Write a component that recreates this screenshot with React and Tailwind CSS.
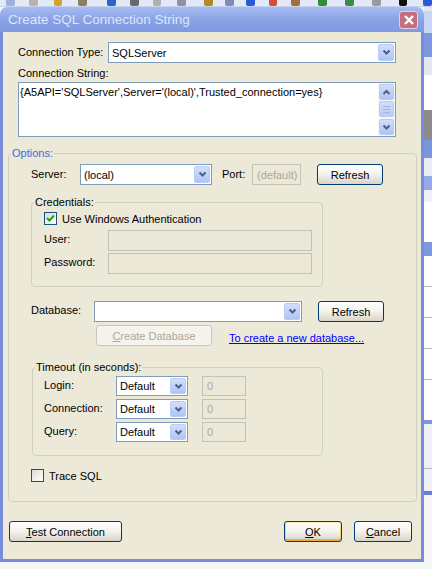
import React from "react";

// Windows XP style "Create SQL Connection String" dialog

const Chevron = () => (
  <svg width="9" height="7" viewBox="0 0 9 7">
    <path d="M1.5 1.5 L4.5 4.5 L7.5 1.5" fill="none" stroke="#4d6185" strokeWidth="2" />
  </svg>
);

const ChevronUp = () => (
  <svg width="9" height="7" viewBox="0 0 9 7">
    <path d="M1.5 5 L4.5 2 L7.5 5" fill="none" stroke="#4d6185" strokeWidth="2" />
  </svg>
);

const DropBtn = ({ className = "" }) => (
  <div
    className={`w-[16px] m-[1px] rounded-[2px] border border-[#b9cbf5] bg-linear-to-b from-[#d2defc] to-[#b0c4f5] flex items-center justify-center ${className}`}
  >
    <Chevron />
  </div>
);

const Combo = ({ className, value }) => (
  <div className={`flex border border-[#7f9db9] bg-white ${className}`}>
    <div className="flex-1 flex items-center pl-[3px] text-black">{value}</div>
    <DropBtn />
  </div>
);

const Field = ({ className, value }) => (
  <div
    className={`flex items-center pl-[4px] border border-[#c4c2b4] bg-[#ebe8d8] text-[#aca899] ${className}`}
  >
    {value}
  </div>
);

const Button = ({ className = "", children, active, disabled }) => (
  <div
    className={`flex items-center justify-center rounded-[3px] border ${
      disabled
        ? "border-[#c9c7ba] bg-[#f4f3ee] text-[#aca899]"
        : "border-[#003c74] bg-linear-to-b from-white via-[#f3f2ec] to-[#d9d4c8] text-black"
    } ${
      active
        ? "shadow-[inset_0_1px_0_#ffeab0,inset_0_-2px_0_#f0ad3c,inset_1px_0_0_#f9d27a,inset_-1px_0_0_#f9d27a]"
        : ""
    } ${className}`}
  >
    {children}
  </div>
);

const Check = ({ checked }) => (
  <div className="w-[13px] h-[13px] border border-[#1c5180] bg-linear-to-br from-[#dcdcd5] to-white flex items-center justify-center">
    {checked && (
      <svg width="9" height="9" viewBox="0 0 9 9">
        <path d="M1 4 L3.5 6.5 L8 1.5" fill="none" stroke="#21a121" strokeWidth="2" />
      </svg>
    )}
  </div>
);

const Group = ({ label, labelClass = "text-black", className, children }) => (
  <div className={`flex flex-col border border-[#d0d0bf] rounded-[4px] ${className}`}>
    <div className={`-mt-[8px] ml-[2px] px-[1px] w-fit h-[14px] leading-[14px] bg-[#ece9d8] ${labelClass}`}>
      {label}
    </div>
    {children}
  </div>
);

const TimeoutRow = ({ label, className }) => (
  <div className={`flex items-center h-[20px] ${className}`}>
    <div className="ml-[11px] w-[72px] -mt-[3px]">{label}</div>
    <Combo className="w-[72px] h-[20px]" value="Default" />
    <Field className="ml-[14px] w-[44px] h-[20px]" value="0" />
  </div>
);

const toolbarIcons = [
  ["ml-[6px]", "bg-[#9fb0d6]"],
  ["ml-[14px]", "bg-[#b9b4a8]"],
  ["ml-[16px]", "bg-[#d2a52a]"],
  ["ml-[16px]", "bg-[#8a7e64]"],
  ["ml-[20px]", "bg-[#3060c8]"],
  ["ml-[14px]", "bg-[#6a6a6a]"],
  ["ml-[14px]", "bg-[#b0b0b0]"],
  ["ml-[16px]", "bg-[#9090a0]"],
  ["ml-[18px]", "bg-[#b08a28]"],
  ["ml-[12px]", "bg-[#7d8db0]"],
  ["ml-[12px]", "bg-[#2a5ad8]"],
  ["ml-[14px]", "bg-[#d05030]"],
  ["ml-[14px]", "bg-[#a07040]"],
  ["ml-[18px]", "bg-[#2f8a3a]"],
  ["ml-[18px]", "bg-[#3a8a50]"],
  ["ml-[18px]", "bg-[#9a9aa0]"],
  ["ml-[18px]", "bg-[#111111]"],
  ["ml-[16px]", "bg-[#2a5ad8]"],
];

const sideBands = [
  ["h-[4px]", "bg-[#dfe5f6]"],
  ["h-[22px]", "bg-[#c9d6f6]"],
  ["h-[24px]", "bg-[#7d98e0]"],
  ["h-[18px]", "bg-[#e5e8f2]"],
  ["h-[35px]", "bg-white"],
  ["h-[30px]", "bg-[#8c8c8c]"],
  ["h-[18px]", "bg-[#7896de]"],
  ["h-[18px]", "bg-[#e8ecf4]"],
  ["h-[14px]", "bg-[#94abea]"],
  ["h-[12px]", "bg-[#eef1f8]"],
  ["h-[40px]", "bg-white"],
  ["h-[14px]", "bg-[#7d98e0]"],
  ["h-[30px]", "bg-white"],
  ["h-[1px]", "bg-[#b8b8b8]"],
  ["h-[30px]", "bg-white"],
  ["h-[1px]", "bg-[#b8b8b8]"],
  ["h-[30px]", "bg-white"],
  ["h-[1px]", "bg-[#b8b8b8]"],
  ["h-[30px]", "bg-white"],
  ["h-[1px]", "bg-[#b8b8b8]"],
  ["h-[40px]", "bg-white"],
  ["h-[4px]", "bg-[#7d98e0]"],
  ["h-[44px]", "bg-[#eef0f6]"],
  ["h-[1px]", "bg-[#b8b8b8]"],
  ["h-[22px]", "bg-[#eef0f6]"],
  ["h-[4px]", "bg-[#6c7fd8]"],
];

export default function App() {
  return (
    <div className="w-[432px] h-[569px] overflow-hidden bg-[#f6f6f6] flex flex-col font-['Liberation_Sans','DejaVu_Sans',sans-serif] text-[11px] leading-[14px] text-black">
      {/* background toolbar */}
      <div className="h-[7px] flex items-start bg-[#e4e9f7] border-b border-[#c7d1ee]">
        {toolbarIcons.map(([m, c], i) => (
          <div key={i} className={`${m} w-[10px] h-[6px] rounded-b-[2px] ${c}`} />
        ))}
      </div>

      <div className="flex-1 flex">
        {/* dialog window */}
        <div className="w-[424px] flex flex-col">
          <div className="h-[25px] rounded-t-[7px] bg-linear-to-b from-[#a7bcf1] via-[#8aa3e6] to-[#7f98e0] flex items-center pl-[8px] pr-[6px]">
            <div className="flex-1 text-[13.5px] text-[#dde6fb]">
              Create SQL Connection String
            </div>
            <div className="w-[19px] h-[18px] rounded-[3px] border border-[#e8d0d8] bg-[#c36f80] flex items-center justify-center">
              <svg width="12" height="12" viewBox="0 0 12 12">
                <path d="M2 2 L10 10 M10 2 L2 10" stroke="white" strokeWidth="2.4" />
              </svg>
            </div>
          </div>

          <div className="h-[530px] border-x-[3px] border-b-[3px] border-[#7a8ddc] bg-[#ece9d8] flex flex-col pl-[15px]">
            {/* connection type */}
            <div className="mt-[10px] h-[21px] flex items-center">
              <div className="w-[90px] -mt-[2px]">Connection Type:</div>
              <Combo className="w-[288px] h-[21px]" value="SQLServer" />
            </div>

            <div className="mt-[3px] h-[15px]">Connection String:</div>
            <div className="mt-[1px] w-[378px] h-[55px] border border-[#7f9db9] bg-white flex">
              <div className="flex-1 pl-[1px] pt-[2px] text-[11px]">
                {"{A5API='SQLServer',Server='(local)',Trusted_connection=yes}"}
              </div>
              <div className="w-[17px] bg-[#f7f6f1] flex flex-col">
                <div className="h-[16px] m-[1px] rounded-[2px] border border-[#b9cbf5] bg-linear-to-b from-[#d2defc] to-[#b0c4f5] flex items-center justify-center">
                  <ChevronUp />
                </div>
                <div className="h-[16px] mx-[1px] rounded-[2px] border border-[#b9cbf5] bg-linear-to-b from-[#d2defc] to-[#b8cbf7] flex flex-col items-center justify-center gap-[2px]">
                  <div className="w-[7px] h-[1px] bg-[#9eb4e8]" />
                  <div className="w-[7px] h-[1px] bg-[#9eb4e8]" />
                  <div className="w-[7px] h-[1px] bg-[#9eb4e8]" />
                </div>
                <div className="flex-1" />
                <div className="h-[16px] m-[1px] rounded-[2px] border border-[#b9cbf5] bg-linear-to-b from-[#d2defc] to-[#b0c4f5] flex items-center justify-center">
                  <Chevron />
                </div>
              </div>
            </div>

            {/* options */}
            <Group
              label="Options:"
              labelClass="text-[#3d68e6]"
              className="-ml-[10px] mt-[16px] w-[409px] pb-[19px]"
            >
              <div className="mt-[4px] h-[21px] flex items-center">
                <div className="ml-[22px] w-[49px] -mt-[2px]">Server:</div>
                <Combo className="w-[132px] h-[21px]" value="(local)" />
                <div className="ml-[10px] w-[30px] -mt-[2px]">Port:</div>
                <Field className="w-[49px] h-[21px]" value="(default)" />
                <Button className="ml-[16px] w-[66px] h-[21px]">Refresh</Button>
              </div>

              <Group label="Credentials:" className="ml-[22px] mt-[17px] w-[292px] pb-[12px]">
                <div className="mt-[3px] ml-[12px] h-[13px] flex items-center">
                  <Check checked />
                  <div className="ml-[5px]">Use Windows Authentication</div>
                </div>
                <div className="mt-[5px] h-[21px] flex items-center">
                  <div className="ml-[12px] w-[64px] -mt-[3px]">User:</div>
                  <Field className="w-[204px] h-[21px]" value="" />
                </div>
                <div className="mt-[2px] h-[21px] flex items-center">
                  <div className="ml-[12px] w-[64px] -mt-[3px]">Password:</div>
                  <Field className="w-[204px] h-[21px]" value="" />
                </div>
              </Group>

              <div className="mt-[14px] h-[21px] flex items-center">
                <div className="ml-[22px] w-[63px] -mt-[3px]">Database:</div>
                <Combo className="w-[208px] h-[21px]" value="" />
                <Button className="ml-[16px] w-[66px] h-[21px]">Refresh</Button>
              </div>

              <div className="mt-[3px] h-[21px] flex items-center">
                <Button disabled className="ml-[87px] w-[116px] h-[21px]">
                  <span>
                    <span className="underline">C</span>reate Database
                  </span>
                </Button>
                <div className="ml-[17px] mt-[5px] text-[#0000ff] underline">
                  To create a new database...
                </div>
              </div>

              <Group label="Timeout (in seconds):" className="ml-[23px] mt-[21px] w-[291px] pb-[13px]">
                <TimeoutRow label="Login:" className="mt-[2px]" />
                <TimeoutRow label="Connection:" className="mt-[3px]" />
                <TimeoutRow label="Query:" className="mt-[3px]" />
              </Group>

              <div className="mt-[13px] ml-[22px] h-[13px] flex items-center">
                <Check />
                <div className="ml-[5px]">Trace SQL</div>
              </div>
            </Group>

            {/* bottom buttons */}
            <div className="mt-[19px] h-[21px] flex items-center -ml-[9px]">
              <Button className="w-[113px] h-[21px]">
                <span>
                  <span className="underline">T</span>est Connection
                </span>
              </Button>
              <Button active className="ml-[162px] w-[58px] h-[21px]">
                <span>
                  <span className="underline">O</span>K
                </span>
              </Button>
              <Button className="ml-[12px] w-[58px] h-[21px]">
                <span>
                  <span className="underline">C</span>ancel
                </span>
              </Button>
            </div>
          </div>
        </div>

        {/* app visible behind the dialog */}
        <div className="flex-1 flex flex-col">
          {sideBands.map(([h, c], i) => (
            <div key={i} className={`${h} ${c}`} />
          ))}
        </div>
      </div>
    </div>
  );
}
